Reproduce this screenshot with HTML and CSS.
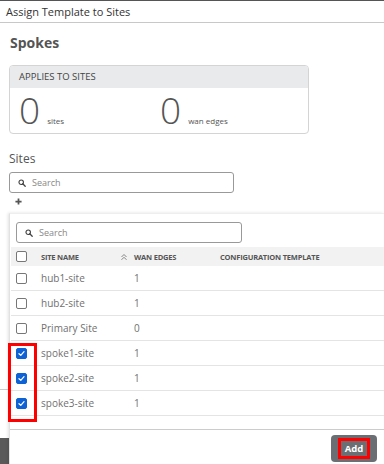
FILE: index.html
```html
<!DOCTYPE html>
<html>
<head>
<meta charset="utf-8">
<link rel="stylesheet" href="styles.css">
</head>
<body>
<div class="page">
  <div class="titlebar">Assign Template to Sites</div>
  <div class="content">
    <h1 class="heading">Spokes</h1>
    <div class="card">
      <div class="card-head">APPLIES TO SITES</div>
      <div class="card-body">
        <div class="stat"><span class="num">0</span><span class="unit">sites</span></div>
        <div class="stat"><span class="num">0</span><span class="unit">wan edges</span></div>
      </div>
    </div>
    <div class="section-label">Sites</div>
    <div class="search search-outer">
      <svg class="sicon" viewBox="0 0 10 10" width="8" height="8"><circle cx="4" cy="4" r="2.8" fill="none" stroke="#444" stroke-width="1.4"/><path d="M6 6 L9 9" stroke="#444" stroke-width="1.6" stroke-linecap="round"/></svg>
      <span class="ph">Search</span>
    </div>
    <div class="plus"><svg viewBox="0 0 8 8" width="7" height="7"><path d="M4 0.5 V7.5 M0.5 4 H7.5" stroke="#555" stroke-width="2"/></svg></div>
  </div>
  <div class="spacer"></div>
  <div class="footer"></div>

  <div class="popup">
    <div class="search search-inner">
      <svg class="sicon" viewBox="0 0 10 10" width="8" height="8"><circle cx="4" cy="4" r="2.8" fill="none" stroke="#444" stroke-width="1.4"/><path d="M6 6 L9 9" stroke="#444" stroke-width="1.6" stroke-linecap="round"/></svg>
      <span class="ph">Search</span>
    </div>
    <div class="table">
      <div class="row head">
        <div class="c-check"><span class="cb"></span></div>
        <div class="c-name">SITE NAME<svg class="sort" viewBox="0 0 8 8" width="8" height="8"><path d="M1.5 4 L4 1.5 L6.5 4 M1.5 6.8 L4 4.3 L6.5 6.8" fill="none" stroke="#777" stroke-width="0.9"/></svg></div>
        <div class="c-wan">WAN EDGES</div>
        <div class="c-tpl">CONFIGURATION TEMPLATE</div>
      </div>
      <div class="row"><div class="c-check"><span class="cb"></span></div><div class="c-name">hub1-site</div><div class="c-wan">1</div><div class="c-tpl"></div></div>
      <div class="row"><div class="c-check"><span class="cb"></span></div><div class="c-name">hub2-site</div><div class="c-wan">1</div><div class="c-tpl"></div></div>
      <div class="row"><div class="c-check"><span class="cb"></span></div><div class="c-name">Primary Site</div><div class="c-wan">0</div><div class="c-tpl"></div></div>
      <div class="row"><div class="c-check"><span class="cb on"><svg viewBox="0 0 10 10" width="9" height="9"><path d="M2.2 5.2 L4.2 7 L7.8 3" fill="none" stroke="#fff" stroke-width="1.4" stroke-linecap="round" stroke-linejoin="round"/></svg></span></div><div class="c-name">spoke1-site</div><div class="c-wan">1</div><div class="c-tpl"></div></div>
      <div class="row"><div class="c-check"><span class="cb on"><svg viewBox="0 0 10 10" width="9" height="9"><path d="M2.2 5.2 L4.2 7 L7.8 3" fill="none" stroke="#fff" stroke-width="1.4" stroke-linecap="round" stroke-linejoin="round"/></svg></span></div><div class="c-name">spoke2-site</div><div class="c-wan">1</div><div class="c-tpl"></div></div>
      <div class="row"><div class="c-check"><span class="cb on"><svg viewBox="0 0 10 10" width="9" height="9"><path d="M2.2 5.2 L4.2 7 L7.8 3" fill="none" stroke="#fff" stroke-width="1.4" stroke-linecap="round" stroke-linejoin="round"/></svg></span></div><div class="c-name">spoke3-site</div><div class="c-wan">1</div><div class="c-tpl"></div></div>
      <div class="highlight-checks"></div>
    </div>
    <div class="actions">
      <button class="add"><span class="add-label">Add</span></button>
    </div>
  </div>
</div>
</body>
</html>
```
FILE: styles.css
```css
* { box-sizing: border-box; }
html, body { margin: 0; padding: 0; }
body {
  font-family: "Open Sans", "Noto Sans", sans-serif;
  color: #555;
  background: #fff;
  width: 384px;
  height: 464px;
  overflow: hidden;
}
.page {
  position: relative;
  height: 464px;
  display: flex;
  flex-direction: column;
  overflow: hidden;
}
.titlebar {
  border-top: 1px solid #555;
  border-bottom: 1px solid #c8c8c8;
  height: 23px;
  padding: 2px 0 0 6px;
  font-size: 11px;
  line-height: 18px;
  color: #333;
  background: #fff;
}
.content {
  padding: 0 0 0 9px;
}
.heading {
  margin: 10px 0 0 1px;
  font-size: 14px;
  line-height: 20px;
  font-weight: 700;
  color: #555;
}
.card {
  margin-top: 12px;
  width: 300px;
  height: 69px;
  border: 1px solid #d4d4d4;
  border-radius: 4px;
  overflow: hidden;
}
.card-head {
  background: #e9eaec;
  height: 22px;
  padding-left: 9px;
  font-size: 9.5px;
  line-height: 22px;
  color: #444;
}
.card-body {
  display: flex;
  padding-left: 9px;
}
.stat {
  width: 141px;
  display: flex;
  align-items: baseline;
}
.num {
  font-size: 37px;
  font-weight: 300;
  line-height: 44px;
  color: #555;
}
.unit {
  font-size: 8px;
  margin-left: 7px;
  color: #555;
}
.section-label {
  margin-top: 17px;
  font-size: 12px;
  line-height: 16px;
  color: #555;
}
.search {
  display: flex;
  align-items: center;
  height: 21px;
  border: 1px solid #999;
  border-radius: 3px;
  padding-left: 8px;
}
.search-outer {
  margin-top: 5px;
  width: 225px;
}
.sicon { margin-right: 6px; }
.ph {
  font-size: 9px;
  color: #888;
}
.plus {
  margin: 5px 0 0 6px;
  height: 7px;
  display: flex;
}
.spacer {
  flex: 1;
}
.spacer::before {
  content: "";
  display: block;
  margin-top: 184px;
  border-top: 1px solid #ccc;
}
.footer {
  height: 26px;
  background: #5a5a5a;
}
.popup {
  position: absolute;
  top: 213px;
  left: 9px;
  right: 0;
  height: 260px;
  background: #fff;
  border-left: 1px solid #e2e2e2;
  border-top: 1px solid #eee;
  box-shadow: -1px 0 3px rgba(0,0,0,0.12);
  padding-top: 8px;
}
.search-inner {
  margin-left: 6px;
  width: 226px;
}
.table {
  position: relative;
  margin-top: 4px;
  margin-left: 1px;
}
.row {
  display: flex;
  align-items: center;
  height: 25px;
  border-bottom: 1px solid #e4e4e4;
  font-size: 10px;
  color: #707070;
}
.row.head {
  height: 19px;
  background: #f2f2f2;
  border-bottom: none;
  font-size: 7.5px;
  font-weight: 700;
  color: #555;
  letter-spacing: -0.2px;
}
.c-check {
  width: 30px;
  padding-left: 5px;
  display: flex;
  align-items: center;
}
.cb {
  width: 11px;
  height: 11px;
  border: 1px solid #777;
  border-radius: 2px;
  display: flex;
  align-items: center;
  justify-content: center;
  background: #fff;
}
.cb.on {
  background: #0d63d6;
  border-color: #0d63d6;
}
.c-name {
  width: 93px;
  position: relative;
}
.sort {
  position: absolute;
  left: 79px;
  top: 1px;
}
.c-wan { width: 86px; }
.c-tpl { flex: 1; }
.highlight-checks {
  position: absolute;
  left: -3px;
  top: 96px;
  width: 29px;
  height: 79px;
  border: 3px solid #f00;
}
.actions {
  margin-top: 13px;
  border-top: 1px solid #ccc;
  padding: 5px 0 0 321px;
}
.add {
  width: 46px;
  height: 27px;
  border: none;
  border-radius: 4px;
  background: #6b6e72;
  padding: 0;
  display: flex;
  align-items: center;
  justify-content: center;
}
.add-label {
  display: block;
  width: 32px;
  height: 21px;
  border: 3px solid #f00;
  color: #fff;
  font-family: "Open Sans", sans-serif;
  font-weight: 700;
  font-size: 9.5px;
  line-height: 15px;
}
```
